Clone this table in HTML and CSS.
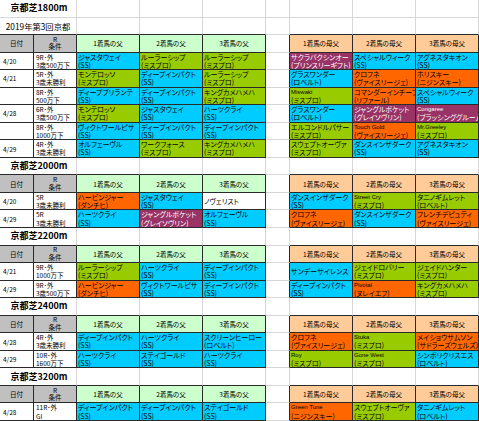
FILE: index.html
```html
<!DOCTYPE html>
<html lang="ja">
<head>
<meta charset="utf-8">
<link rel="stylesheet" href="styles.css">
</head>
<body>
<div class="sheet">
  <!-- 1800m -->
  <div class="ttl">京都芝1800m</div>
  <div class="g"></div><div class="g"></div><div class="g"></div><div class="g"></div><div class="g"></div><div class="g"></div><div class="g"></div>
  <div class="sub ab">2019年第3回京都</div>
  <div class="g ab"></div><div class="g ab"></div><div class="g ab"></div><div class="g"></div><div class="g ab"></div><div class="g ab"></div><div class="g ab"></div>
  <div class="h gray">日付</div><div class="h gray two">R<br>条件</div>
  <div class="h lg">1着馬の父</div><div class="h lg">2着馬の父</div><div class="h lg">3着馬の父</div>
  <div class="gap"></div>
  <div class="h pc">1着馬の母父</div><div class="h pc">2着馬の母父</div><div class="h pc">3着馬の母父</div>

  <div class="dt">4/20</div><div class="r">9R･外<br>3歳500万下</div>
  <div class="d cy">ジャスタウェイ<br>(SS)</div><div class="d gr">ルーラーシップ<br>(ミスプロ)</div><div class="d gr">ルーラーシップ<br>(ミスプロ)</div>
  <div class="gap"></div>
  <div class="d pu">サクラバクシンオー<br>(プリンスリーギフト)</div><div class="d cy">スペシャルウィーク<br>(SS)</div><div class="d cy">アグネスタキオン<br>(SS)</div>

  <div class="dt">4/21</div><div class="r">5R･外<br>3歳未勝利</div>
  <div class="d gr">モンテロッソ<br>(ミスプロ)</div><div class="d cy">ディープインパクト<br>(SS)</div><div class="d gr">ルーラーシップ<br>(ミスプロ)</div>
  <div class="gap"></div>
  <div class="d cy">グラスワンダー<br>(ロベルト)</div><div class="d or">クロフネ<br>(ヴァイスリージェ)</div><div class="d or">ホリスキー<br>(ニジンスキー)</div>

  <div class="dt"></div><div class="r">8R･外<br>500万下</div>
  <div class="d cy">ディープブリランテ<br>(SS)</div><div class="d cy">ディープインパクト<br>(SS)</div><div class="d gr">キングカメハメハ<br>(ミスプロ)</div>
  <div class="gap"></div>
  <div class="d gr lat">Miswaki<br><span class="jp">(ミスプロ)</span></div><div class="d or">コマンダーインチーフ<br>(リファール)</div><div class="d cy">スペシャルウィーク<br>(SS)</div>

  <div class="dt">4/28</div><div class="r">6R･外<br>3歳500万下</div>
  <div class="d gr">モンテロッソ<br>(ミスプロ)</div><div class="d cy">ジャスタウェイ<br>(SS)</div><div class="d cy">ハーツクライ<br>(SS)</div>
  <div class="gap"></div>
  <div class="d cy">グラスワンダー<br>(ロベルト)</div><div class="d pu">ジャングルポケット<br>(グレイソヴリン)</div><div class="d pu lat">Congaree<br><span class="jp">(ブラッシンググルーム)</span></div>

  <div class="dt"></div><div class="r">8R･外<br>1000万下</div>
  <div class="d cy">ヴィクトワールピサ<br>(SS)</div><div class="d cy">ディープインパクト<br>(SS)</div><div class="d cy">ディープインパクト<br>(SS)</div>
  <div class="gap"></div>
  <div class="d gr">エルコンドルパサー<br>(ミスプロ)</div><div class="d or lat">Touch Gold<br><span class="jp">(ヴァイスリージェ)</span></div><div class="d gr lat">Mr.Greeley<br><span class="jp">(ミスプロ)</span></div>

  <div class="dt">4/29</div><div class="r">4R･外<br>3歳未勝利</div>
  <div class="d cy">オルフェーヴル<br>(SS)</div><div class="d gr">ワークフォース<br>(ミスプロ)</div><div class="d gr">キングカメハメハ<br>(ミスプロ)</div>
  <div class="gap"></div>
  <div class="d gr">スウェプトオーヴァ<br>(ミスプロ)</div><div class="d cy">ダンスインザダーク<br>(SS)</div><div class="d cy">アグネスタキオン<br>(SS)</div>

  <!-- 2000m -->
  <div class="ttl ab">京都芝2000m</div>
  <div class="g ab"></div><div class="g ab"></div><div class="g ab"></div><div class="g"></div><div class="g ab"></div><div class="g ab"></div><div class="g ab"></div>
  <div class="h gray">日付</div><div class="h gray two">R<br>条件</div>
  <div class="h lg">1着馬の父</div><div class="h lg">2着馬の父</div><div class="h lg">3着馬の父</div>
  <div class="gap"></div>
  <div class="h pc">1着馬の母父</div><div class="h pc">2着馬の母父</div><div class="h pc">3着馬の母父</div>

  <div class="dt">4/20</div><div class="r">5R<br>3歳未勝利</div>
  <div class="d or">ハービンジャー<br>(ダンチヒ)</div><div class="d cy">ジャスタウェイ<br>(SS)</div><div class="d wh mid">ノヴェリスト</div>
  <div class="gap"></div>
  <div class="d cy">ダンスインザダーク<br>(SS)</div><div class="d gr lat">Street Cry<br><span class="jp">(ミスプロ)</span></div><div class="d gr">タニノギムレット<br>(ロベルト)</div>

  <div class="dt">4/29</div><div class="r">5R<br>3歳未勝利</div>
  <div class="d cy">ハーツクライ<br>(SS)</div><div class="d pu">ジャングルポケット<br>(グレイソヴリン)</div><div class="d cy">オルフェーヴル<br>(SS)</div>
  <div class="gap"></div>
  <div class="d or">クロフネ<br>(ヴァイスリージェ)</div><div class="d cy">ダンスインザダーク<br>(SS)</div><div class="d or">フレンチデピュティ<br>(ヴァイスリージェ)</div>

  <!-- 2200m -->
  <div class="ttl ab">京都芝2200m</div>
  <div class="g ab"></div><div class="g ab"></div><div class="g ab"></div><div class="g"></div><div class="g ab"></div><div class="g ab"></div><div class="g ab"></div>
  <div class="h gray">日付</div><div class="h gray two">R<br>条件</div>
  <div class="h lg">1着馬の父</div><div class="h lg">2着馬の父</div><div class="h lg">3着馬の父</div>
  <div class="gap"></div>
  <div class="h pc">1着馬の母父</div><div class="h pc">2着馬の母父</div><div class="h pc">3着馬の母父</div>

  <div class="dt">4/21</div><div class="r">9R･外<br>1000万下</div>
  <div class="d gr">ルーラーシップ<br>(ミスプロ)</div><div class="d cy">ハーツクライ<br>(SS)</div><div class="d cy">ディープインパクト<br>(SS)</div>
  <div class="gap"></div>
  <div class="d cy mid">サンデーサイレンス</div><div class="d gr">ジェイドロバリー<br>(ミスプロ)</div><div class="d gr">ジェイドハンター<br>(ミスプロ)</div>

  <div class="dt">4/29</div><div class="r">9R･外<br>3歳500万下</div>
  <div class="d or">ハービンジャー<br>(ダンチヒ)</div><div class="d cy">ヴィクトワールピサ<br>(SS)</div><div class="d cy">ディープインパクト<br>(SS)</div>
  <div class="gap"></div>
  <div class="d cy">ディープインパクト<br>(SS)</div><div class="d or lat">Pivotal<br><span class="jp">(ヌレイエフ)</span></div><div class="d gr">キングカメハメハ<br>(ミスプロ)</div>

  <!-- 2400m -->
  <div class="ttl ab">京都芝2400m</div>
  <div class="g ab"></div><div class="g ab"></div><div class="g ab"></div><div class="g"></div><div class="g ab"></div><div class="g ab"></div><div class="g ab"></div>
  <div class="h gray">日付</div><div class="h gray two">R<br>条件</div>
  <div class="h lg">1着馬の父</div><div class="h lg">2着馬の父</div><div class="h lg">3着馬の父</div>
  <div class="gap"></div>
  <div class="h pc">1着馬の母父</div><div class="h pc">2着馬の母父</div><div class="h pc">3着馬の母父</div>

  <div class="dt">4/28</div><div class="r">4R･外<br>3歳未勝利</div>
  <div class="d cy">ディープインパクト<br>(SS)</div><div class="d cy">ハーツクライ<br>(SS)</div><div class="d cy">スクリーンヒーロー<br>(ロベルト)</div>
  <div class="gap"></div>
  <div class="d or">クロフネ<br>(ヴァイスリージェ)</div><div class="d gr lat">Stuka<br><span class="jp">(ミスプロ)</span></div><div class="d or">メイショウサムソン<br>(サドラーズウェルズ)</div>

  <div class="dt">4/29</div><div class="r">10R･外<br>1600万下</div>
  <div class="d cy">ハーツクライ<br>(SS)</div><div class="d cy">ステイゴールド<br>(SS)</div><div class="d cy">ハーツクライ<br>(SS)</div>
  <div class="gap"></div>
  <div class="d gr lat">Roy<br><span class="jp">(ミスプロ)</span></div><div class="d gr lat">Gone West<br><span class="jp">(ミスプロ)</span></div><div class="d cy">シンボリクリスエス<br>(ロベルト)</div>

  <!-- 3200m -->
  <div class="ttl ab">京都芝3200m</div>
  <div class="g ab"></div><div class="g ab"></div><div class="g ab"></div><div class="g"></div><div class="g ab"></div><div class="g ab"></div><div class="g ab"></div>
  <div class="h gray">日付</div><div class="h gray two">R<br>条件</div>
  <div class="h lg">1着馬の父</div><div class="h lg">2着馬の父</div><div class="h lg">3着馬の父</div>
  <div class="gap"></div>
  <div class="h pc">1着馬の母父</div><div class="h pc">2着馬の母父</div><div class="h pc">3着馬の母父</div>

  <div class="dt">4/28</div><div class="r">11R･外<br>GI</div>
  <div class="d cy">ディープインパクト<br>(SS)</div><div class="d cy">ディープインパクト<br>(SS)</div><div class="d cy">ステイゴールド<br>(SS)</div>
  <div class="gap"></div>
  <div class="d or lat">Green Tune<br><span class="jp">(ニジンスキー)</span></div><div class="d gr">スウェプトオーヴァ<br>(ミスプロ)</div><div class="d cy">タニノギムレット<br>(ロベルト)</div>
</div>
</body>
</html>
```
FILE: styles.css
```css
html, body {
  margin: 0;
  padding: 0;
  background: #ffffff;
}

body {
  font-family: "Noto Sans CJK JP", "Noto Sans", sans-serif;
  font-feature-settings: "palt";
  color: #000;
}

.sheet {
  display: grid;
  grid-template-columns: 34px 43px 63px 63px 63px 24px 63px 63px 63px;
  grid-template-rows: repeat(24, 1fr);
  width: 479px;
  height: 421px;
}

.sheet > div {
  box-sizing: border-box;
  border-right: 1px solid #d6d6d6;
  border-bottom: 1px solid #d6d6d6;
  overflow: hidden;
  white-space: nowrap;
  font-size: 7px;
  line-height: 8.1px;
}

.sheet > .ab {
  border-bottom-color: #2a2a2a;
}

.ttl, .sub {
  grid-column: span 2;
  display: flex;
  align-items: center;
  justify-content: center;
}

.ttl {
  font-size: 9px !important;
  font-weight: bold;
  padding-left: 2px;
}

.sub {
  font-size: 8.3px !important;
}

.sheet > .h,
.sheet > .dt,
.sheet > .r,
.sheet > .d {
  border-right-color: #2a2a2a;
  border-bottom-color: #2a2a2a;
}

.sheet > .gap {
  border-right-color: #2a2a2a;
}

.h {
  display: flex;
  align-items: center;
  justify-content: center;
  text-align: center;
  font-size: 6.5px !important;
}

.h.two {
  line-height: 7.6px !important;
}

.gray { background: #c0c0c0; }
.lg { background: #ccffcc; }
.pc { background: #ffcc99; }

.dt {
  display: flex;
  align-items: center;
  padding-left: 3px;
  font-size: 6.5px !important;
}

.r {
  padding: 0 0 0 2px;
  font-size: 6.5px !important;
}

.d {
  padding: 0 0 0 1px;
}

.d.mid {
  display: flex;
  align-items: center;
}

.lat {
  font-family: "Liberation Sans", "Noto Sans CJK JP", sans-serif;
  font-size: 6px !important;
}

.lat .jp {
  font-family: "Noto Sans CJK JP", sans-serif;
  font-size: 7px;
}

.cy { background: #00ccff; }
.gr { background: #99cc00; }
.or { background: #ff6600; }
.pu { background: #993366; color: #ffffff; }
.wh { background: #ffffff; }
```
